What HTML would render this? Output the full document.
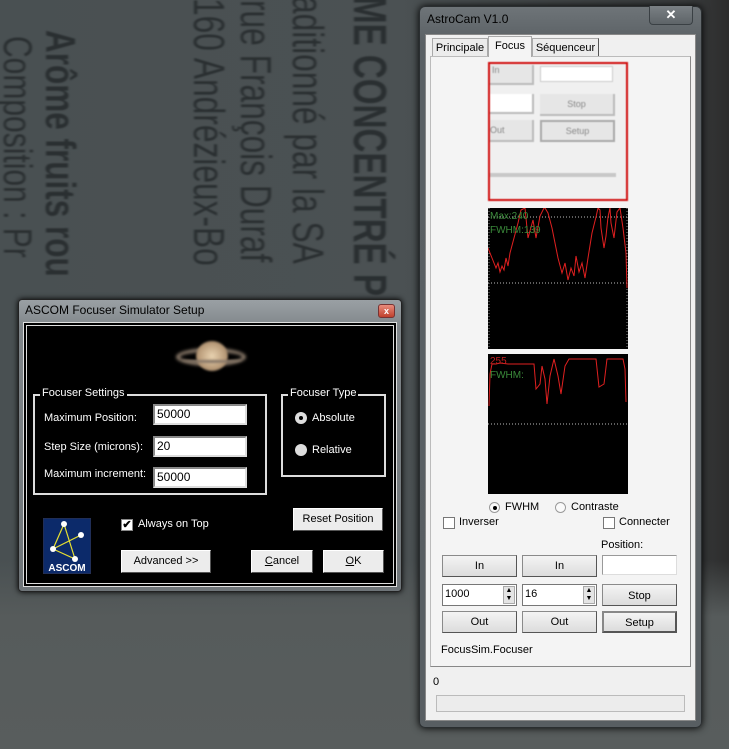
<!DOCTYPE html>
<html><head><meta charset="utf-8">
<style>
*{box-sizing:border-box;margin:0;padding:0}
body{width:729px;height:749px;overflow:hidden;position:relative;font-family:"Liberation Sans",sans-serif;font-size:11px;background:#4c5254}
.abs{position:absolute}
.vt{position:absolute;writing-mode:vertical-rl;color:#2a2f31;white-space:nowrap;filter:blur(1px);font-family:"Liberation Sans",sans-serif;transform-origin:top left}
.btn{position:absolute;background:linear-gradient(#f4f4f4,#dcdcdc);border:1px solid #8a8a8a;border-right-color:#555;border-bottom-color:#555;text-align:center;color:#000;font-size:11px}
.tb{position:absolute;background:#fff;border:1px solid #999;border-right-color:#ddd;border-bottom-color:#ddd;font-size:11px;padding-left:2px}
.dbtn{position:absolute;background:#ececec;border:1px solid #fff;border-right-color:#555;border-bottom-color:#555;text-align:center;font-size:11px;color:#000}
.fld{position:absolute;background:#fff;border:2px solid #888;border-right-color:#ddd;border-bottom-color:#ddd;font-size:12px;padding-left:2px;line-height:16px}
.lbl{position:absolute;color:#fff;font-size:11px}
</style></head><body>
<div class="abs" style="left:0;top:0;width:729px;height:749px;background:linear-gradient(90deg,#495052 0%,#4b5153 55%,#3a3d3e 94%,#2c2c2c 100%)"></div>
<div class="abs" style="left:0;top:560px;width:729px;height:189px;background:linear-gradient(rgba(80,85,86,0),#565b5b 30%,#585d5d)"></div>
<div class="vt" style="left:343px;top:-4px;font-size:46px;font-weight:bold;transform:scaleY(0.72)">ME CONCENTRÉ P</div>
<div class="vt" style="left:282px;top:-4px;font-size:44px;transform:scaleY(0.72)">aditionné par la SA</div>
<div class="vt" style="left:230px;top:0px;font-size:44px;transform:scaleY(0.72)">rue François Duraf</div>
<div class="vt" style="left:183px;top:-2px;font-size:44px;transform:scaleY(0.72)">160 Andrézieux-Bo</div>
<div class="vt" style="left:36px;top:30px;font-size:42px;font-weight:bold;transform:scaleY(0.75)">Arôme fruits rou</div>
<div class="vt" style="left:-6px;top:36px;font-size:40px;transform:scaleY(0.75)">Composition : Pr</div>

<!-- AstroCam window -->
<div class="abs" style="left:419px;top:6px;width:283px;height:722px;background:linear-gradient(#6e7478,#5a6064 5%,#585e62);border:1px solid #2a2e30;border-radius:6px;box-shadow:0 0 8px #000"></div>
<div class="abs" style="left:427px;top:12px;color:#000;font-size:12px">AstroCam V1.0</div>
<div class="abs" style="left:649px;top:6px;width:44px;height:19px;border:1px solid #3a4044;border-top:none;border-radius:0 0 4px 4px;background:linear-gradient(#7a8084,#5e6468);color:#fff;text-align:center;font-weight:bold;font-size:13px;line-height:18px">✕</div>
<div class="abs" style="left:425px;top:34px;width:271px;height:687px;background:#f0f0f0;border:1px solid #888"></div>
<div class="abs" style="left:432px;top:38px;width:56px;height:19px;border:1px solid #aaa;background:#ececec;font-size:11px;text-align:center;line-height:18px">Principale</div>
<div class="abs" style="left:488px;top:36px;width:44px;height:21px;border:1px solid #aaa;border-bottom:none;background:#f4f4f4;font-size:11px;text-align:center;line-height:19px;z-index:2">Focus</div>
<div class="abs" style="left:532px;top:38px;width:67px;height:19px;border:1px solid #aaa;border-right-color:#555;background:#ececec;font-size:11px;text-align:center;line-height:18px">Séquenceur</div>
<div class="abs" style="left:430px;top:56px;width:261px;height:611px;background:#f4f4f4;border:1px solid #bbb;border-right-color:#888;border-bottom-color:#888"></div>
<div class="abs" style="left:488px;top:62px;width:140px;height:139px;border:2px solid #d01010;background:#f0f0f0;overflow:hidden;filter:blur(0.6px)">
 <div class="abs" style="left:0;top:1px;width:44px;height:20px;background:#e6e6e6;border-right:2px solid #bbb;border-bottom:2px solid #bbb;font-size:9px;color:#888;padding-left:2px">In</div>
 <div class="abs" style="left:50px;top:2px;width:73px;height:16px;background:#fff;border:1px solid #ccc"></div>
 <div class="abs" style="left:0;top:30px;width:44px;height:20px;background:#fff;border-right:2px solid #bbb;border-bottom:2px solid #bbb"></div>
 <div class="abs" style="left:50px;top:30px;width:75px;height:22px;background:#e6e6e6;border-right:2px solid #bbb;border-bottom:2px solid #bbb;text-align:center;font-size:9px;color:#888;line-height:20px">Stop</div>
 <div class="abs" style="left:0;top:56px;width:44px;height:22px;background:#e6e6e6;border-right:2px solid #bbb;border-bottom:2px solid #bbb;font-size:9px;color:#888;line-height:20px">Out</div>
 <div class="abs" style="left:50px;top:56px;width:75px;height:22px;background:#e6e6e6;border:2px solid #aaa;text-align:center;font-size:9px;color:#888;line-height:18px">Setup</div>
 <div class="abs" style="left:0;top:109px;width:126px;height:4px;background:#c8c8c8"></div>
</div>
<svg class="abs" style="left:488px;top:208px" width="140" height="141">
<rect width="140" height="141" fill="#000"/>
<line x1="0" y1="9" x2="140" y2="9" stroke="#bbb" stroke-dasharray="1 2"/>
<line x1="0" y1="75" x2="140" y2="75" stroke="#bbb" stroke-dasharray="1 2"/>
<line x1="1" y1="0" x2="1" y2="141" stroke="#888" stroke-dasharray="1 2"/>
<line x1="139" y1="0" x2="139" y2="141" stroke="#888" stroke-dasharray="1 2"/>
<polyline fill="none" stroke="#e02020" stroke-width="1" points="0,40 4,50 8,60 10,55 12,64 14,58 16,62 18,50 20,58 22,45 26,30 30,15 33,2 37,0 40,30 45,12 48,30 52,8 56,0 57,0 60,5 64,20 70,50 74,65 77,55 80,72 83,60 86,68 88,48 91,64 94,55 97,70 100,50 104,25 108,9 110,0 112,2 113,20 116,40 118,28 120,9 122,0 123,15 126,30 129,4 132,0 135,20 138,45 139,80"/>
<text x="2" y="11" fill="#3a8a3a" font-family="Liberation Sans" font-size="10">Max:240</text>
<text x="2" y="25" fill="#3a8a3a" font-family="Liberation Sans" font-size="10">FWHM:139</text>
</svg>
<svg class="abs" style="left:488px;top:354px" width="140" height="140">
<rect width="140" height="140" fill="#000"/>
<line x1="0" y1="70" x2="140" y2="70" stroke="#bbb" stroke-dasharray="1 2"/>
<polyline fill="none" stroke="#e02020" stroke-width="1" points="1,52 2,20 4,10 8,10 12,9 20,10 46,10 48,35 52,30 54,12 57,25 59,50 62,22 66,5 70,22 73,40 77,12 81,5 108,5 111,33 116,30 119,5 135,5 137,15 138,48"/>
<text x="2" y="10" fill="#c02020" font-family="Liberation Sans" font-size="10">255</text>
<text x="2" y="24" fill="#3a8a3a" font-family="Liberation Sans" font-size="10">FWHM:</text>
</svg>
<div class="abs" style="left:489px;top:502px;width:11px;height:11px;border-radius:50%;border:1px solid #999;background:#fafafa"></div>
<div class="abs" style="left:493px;top:506px;width:4px;height:4px;border-radius:50%;background:#000"></div>
<div class="abs" style="left:505px;top:501px;font-size:11px">FWHM</div>
<div class="abs" style="left:555px;top:502px;width:11px;height:11px;border-radius:50%;border:1px solid #999;background:#fafafa"></div>
<div class="abs" style="left:571px;top:501px;font-size:11px">Contraste</div>
<div class="abs" style="left:443px;top:517px;width:12px;height:12px;border:1px solid #777;background:#fff"></div>
<div class="abs" style="left:459px;top:516px;font-size:11px">Inverser</div>
<div class="abs" style="left:603px;top:517px;width:12px;height:12px;border:1px solid #777;background:#fff"></div>
<div class="abs" style="left:619px;top:516px;font-size:11px">Connecter</div>
<div class="abs" style="left:601px;top:539px;font-size:11px">Position:</div>
<div class="btn" style="left:442px;top:555px;width:75px;height:22px;line-height:20px">In</div>
<div class="btn" style="left:522px;top:555px;width:75px;height:22px;line-height:20px">In</div>
<div class="tb" style="left:602px;top:555px;width:75px;height:20px"></div>
<div class="tb" style="left:442px;top:584px;width:75px;height:22px;line-height:18px;border-color:#777">1000</div>
<div class="abs" style="left:503px;top:586px;width:12px;height:18px;background:#e4e4e4;border:1px solid #aaa;font-size:7px;line-height:8px;text-align:center">▲<br>▼</div>
<div class="tb" style="left:522px;top:584px;width:75px;height:22px;line-height:18px;border-color:#777">16</div>
<div class="abs" style="left:583px;top:586px;width:12px;height:18px;background:#e4e4e4;border:1px solid #aaa;font-size:7px;line-height:8px;text-align:center">▲<br>▼</div>
<div class="btn" style="left:602px;top:584px;width:75px;height:22px;line-height:22px">Stop</div>
<div class="btn" style="left:442px;top:611px;width:75px;height:22px;line-height:20px">Out</div>
<div class="btn" style="left:522px;top:611px;width:75px;height:22px;line-height:20px">Out</div>
<div class="btn" style="left:602px;top:611px;width:75px;height:22px;line-height:20px;border:2px solid #555;border-top-color:#888;border-left-color:#888">Setup</div>
<div class="abs" style="left:441px;top:644px;font-size:11px">FocusSim.Focuser</div>
<div class="abs" style="left:433px;top:676px;font-size:11px">0</div>
<div class="abs" style="left:436px;top:695px;width:249px;height:17px;border:1px solid #bbb;background:#ececec"></div>

<!-- ASCOM dialog -->
<div class="abs" style="left:18px;top:299px;width:384px;height:293px;background:linear-gradient(#9aa0a4,#7e8488 10%,#6e7478);border:1px solid #222;border-radius:4px;box-shadow:0 0 6px #000"></div>
<div class="abs" style="left:25px;top:303px;font-size:12px;color:#000">ASCOM Focuser Simulator Setup</div>
<div class="abs" style="left:378px;top:304px;width:17px;height:14px;background:linear-gradient(#e88c7c,#c0402c);border:1px solid #733;border-radius:3px;color:#fff;font-size:9px;text-align:center;line-height:12px;font-weight:bold">x</div>
<div class="abs" style="left:23px;top:322px;width:374px;height:265px;background:#000;border:1px solid #ddd"></div>
<div class="abs" style="left:26px;top:325px;width:368px;height:259px;border:1px solid #ddd"></div>
<div class="abs" style="left:176px;top:348px;width:70px;height:18px;border-radius:50%;border:4px solid #8a7a6a;filter:blur(1.5px)"></div>
<div class="abs" style="left:196px;top:341px;width:32px;height:30px;border-radius:50%;background:radial-gradient(#e8d2b0,#b89a78 60%,#5a4a3a);filter:blur(1px)"></div>
<div class="abs" style="left:182px;top:357px;width:60px;height:6px;border-radius:50%;border-bottom:3px solid #8a7a6a;filter:blur(1px)"></div>
<div class="abs" style="left:33px;top:394px;width:234px;height:101px;border:2px solid #ddd"></div>
<div class="lbl" style="left:40px;top:387px;background:#000;padding:0 2px">Focuser Settings</div>
<div class="lbl" style="left:44px;top:412px">Maximum Position:</div>
<div class="lbl" style="left:44px;top:441px">Step Size (microns):</div>
<div class="lbl" style="left:44px;top:468px">Maximum increment:</div>
<div class="fld" style="left:153px;top:404px;width:94px;height:21px">50000</div>
<div class="fld" style="left:153px;top:436px;width:94px;height:21px">20</div>
<div class="fld" style="left:153px;top:467px;width:94px;height:21px">50000</div>
<div class="abs" style="left:281px;top:394px;width:105px;height:83px;border:2px solid #ddd"></div>
<div class="lbl" style="left:288px;top:387px;background:#000;padding:0 2px">Focuser Type</div>
<div class="abs" style="left:295px;top:412px;width:12px;height:12px;border-radius:50%;background:#ddd"></div>
<div class="abs" style="left:299px;top:416px;width:4px;height:4px;border-radius:50%;background:#000"></div>
<div class="lbl" style="left:312px;top:412px">Absolute</div>
<div class="abs" style="left:295px;top:444px;width:12px;height:12px;border-radius:50%;background:#ddd"></div>
<div class="lbl" style="left:312px;top:444px">Relative</div>
<svg class="abs" style="left:43px;top:518px" width="48" height="56">
<rect width="48" height="56" fill="#0c2a6a" stroke="#334" />
<polyline points="21,6 10,31 32,41 21,6" fill="none" stroke="#e8e030" stroke-width="1.2"/>
<line x1="10" y1="31" x2="38" y2="17" stroke="#e8e030" stroke-width="1.2"/>
<circle cx="21" cy="6" r="3" fill="#fff"/><circle cx="38" cy="17" r="3" fill="#fff"/><circle cx="10" cy="31" r="3" fill="#fff"/><circle cx="32" cy="41" r="3" fill="#fff"/>
<text x="24" y="53" fill="#fff" font-family="Liberation Sans" font-weight="bold" font-size="10" text-anchor="middle">ASCOM</text>
</svg>
<div class="abs" style="left:121px;top:519px;width:12px;height:12px;background:#fff;border:1px solid #888;font-size:11px;line-height:10px;text-align:center;font-weight:bold">✔</div>
<div class="lbl" style="left:138px;top:518px">Always on Top</div>
<div class="dbtn" style="left:293px;top:508px;width:90px;height:23px;line-height:21px">Reset Position</div>
<div class="dbtn" style="left:121px;top:550px;width:90px;height:23px;line-height:21px">Advanced &gt;&gt;</div>
<div class="dbtn" style="left:251px;top:550px;width:62px;height:23px;line-height:21px"><u>C</u>ancel</div>
<div class="dbtn" style="left:323px;top:550px;width:61px;height:23px;line-height:21px"><u>O</u>K</div>
</body></html>
